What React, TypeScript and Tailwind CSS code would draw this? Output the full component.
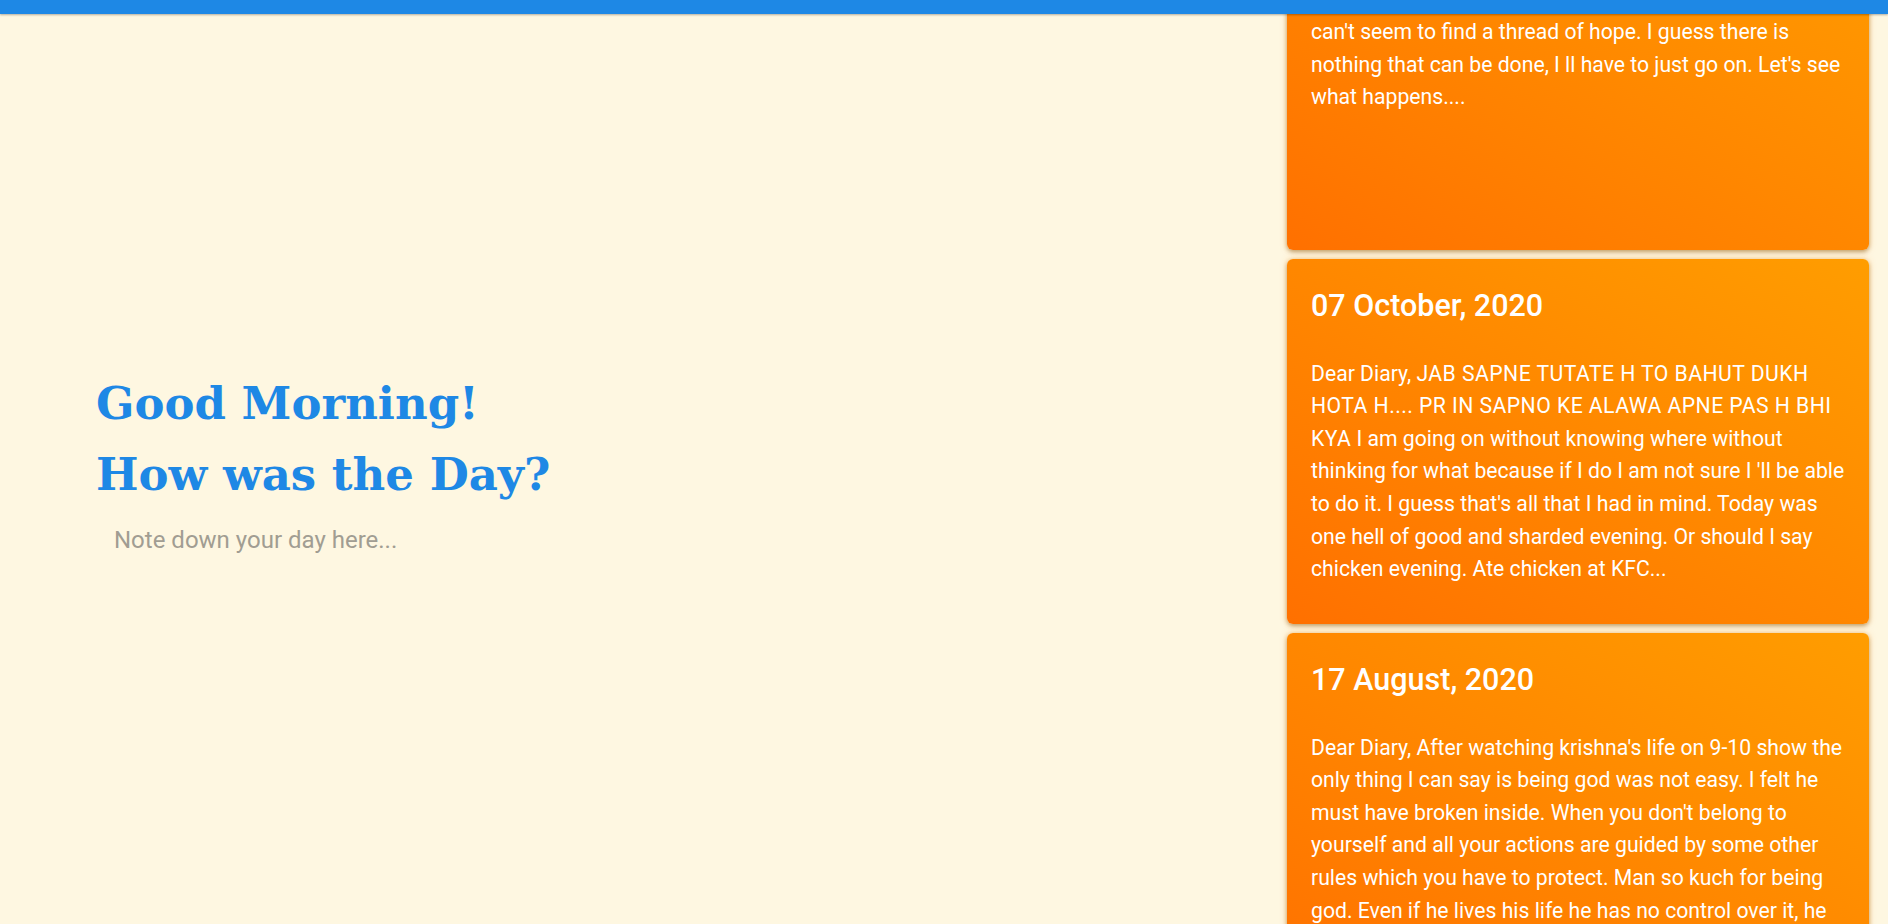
import { ReactNode } from "react";

const Caps = ({ children }: { children: ReactNode }) => (
  <span className="tracking-[0.45px]">{children}</span>
);

const entries = [
  {
    date: "15 October, 2020",
    text: (
      <>
        Dear Diary, Everything feels so heavy today. I try but I
        <br />
        can't seem to find a thread of hope. I guess there is nothing that can
        be done, I ll have to just go on. Let's see what happens....
      </>
    ),
  },
  {
    date: "07 October, 2020",
    text: (
      <>
        Dear Diary,{" "}
        <Caps>
          JAB SAPNE TUTATE H TO BAHUT DUKH HOTA H.... PR IN SAPNO KE ALAWA
          APNE PAS H BHI KYA
        </Caps>{" "}
        I am going on without knowing where without thinking for what because
        if I do I am not sure I 'll be able to do it. I guess that's all that
        I had in mind. Today was one hell of good and sharded evening. Or
        should I say chicken evening. Ate chicken at KFC...
      </>
    ),
  },
  {
    date: "17 August, 2020",
    text: (
      <>
        Dear Diary, After watching krishna's life on 9-10 show the only thing I
        can say is being god was not easy. I felt he must have broken inside.
        When you don't belong to yourself and all your actions are guided by
        some other rules which you have to protect. Man so kuch for being god.
        Even if he lives his life he has no control over it, he was always
        bound by his duties...
      </>
    ),
  },
];

function EntryCard({ date, text }: { date: string; text: ReactNode }) {
  return (
    <div className="h-[365px] shrink-0 overflow-hidden rounded-md bg-gradient-to-tr from-[#ff7000] to-[#ff9d00] px-6 pt-[29px] text-white shadow-[0_2px_4px_rgba(120,80,20,0.45),0_0_6px_rgba(255,170,60,0.5)]">
      <h2 className="text-[30.5px] font-medium leading-[1.2]">{date}</h2>
      <p className="mt-[33px] text-[21.2px] leading-[32.6px]">{text}</p>
    </div>
  );
}

export default function App() {
  return (
    <div
      className="flex h-[924px] flex-col overflow-hidden bg-[#fef7e1]"
      style={{ fontFamily: "Roboto, 'Noto Sans', sans-serif" }}
    >
      <div className="relative z-10 h-[14px] shrink-0 bg-[#1e88e5] shadow-[0_1px_2px_rgba(0,0,0,0.3)]" />
      <div className="flex min-h-0 flex-1">
        <div className="flex flex-1 flex-col justify-center pl-[96px] pt-[8px]">
          <h1
            className="text-[45px] font-bold leading-[71px] text-[#1e88e5]"
            style={{ fontFamily: "'DejaVu Serif', Georgia, serif" }}
          >
            Good Morning!
            <br />
            How was the Day?
          </h1>
          <textarea
            className="mt-[8px] h-[60px] w-[600px] resize-none bg-transparent px-[18px] py-[4px] text-[24px] text-[#9e9e9e] outline-none placeholder:text-[#a19d92]"
            placeholder="Note down your day here..."
          />
        </div>
        <div className="mr-[19px] mt-[-129px] flex w-[582px] shrink-0 flex-col gap-[9px]">
          {entries.map((e) => (
            <EntryCard key={e.date} date={e.date} text={e.text} />
          ))}
        </div>
      </div>
    </div>
  );
}
